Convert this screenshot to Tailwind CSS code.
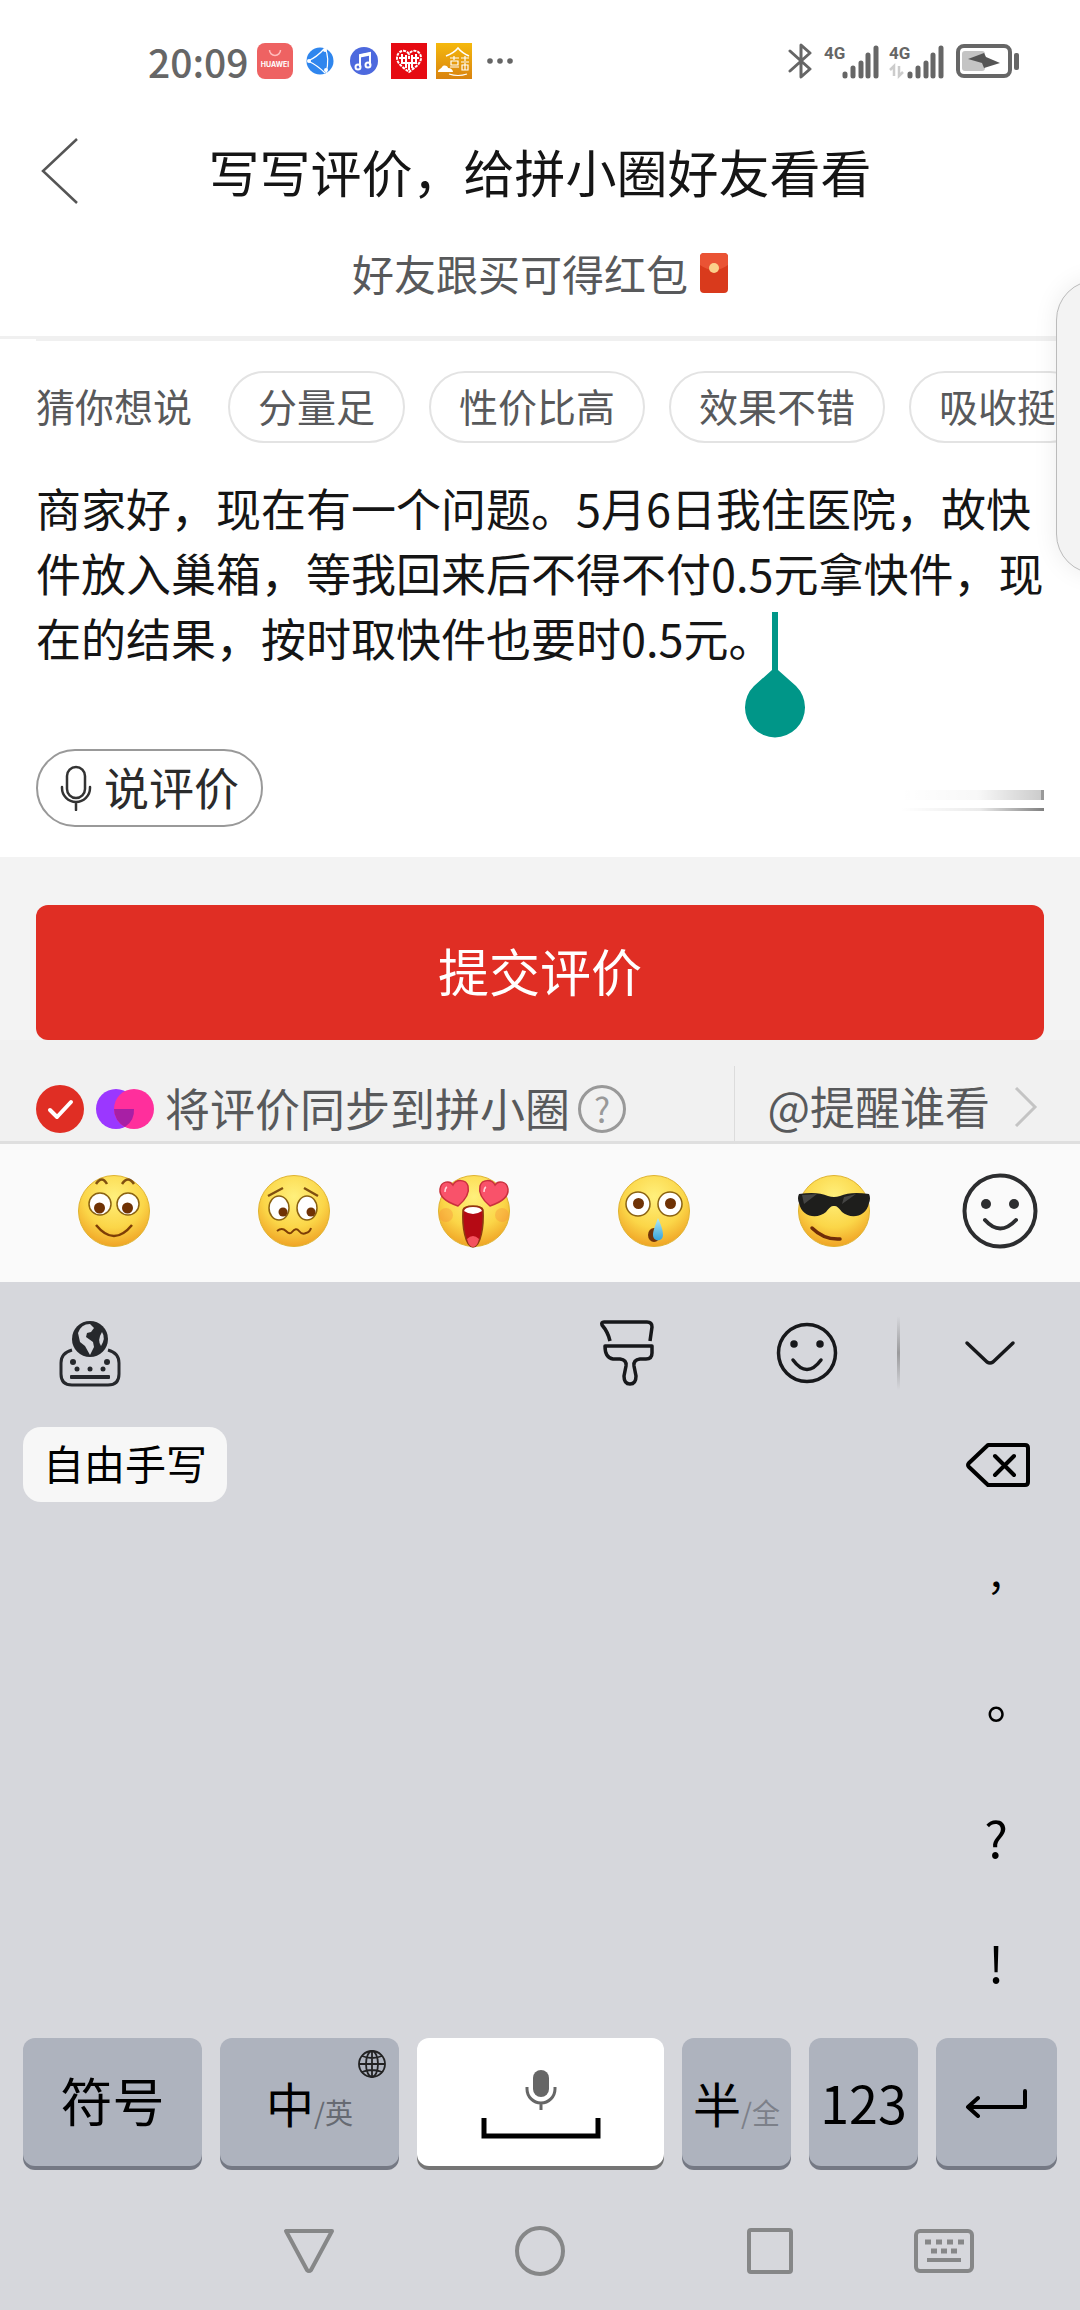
<!DOCTYPE html>
<html lang="zh-CN">
<head>
  <meta charset="UTF-8">
  <meta name="viewport" content="width=device-width, initial-scale=1.0">
  <title>写写评价</title>
  <!-- Tailwind CSS CDN -->
  <script src="https://cdn.jsdelivr.net/npm/@tailwindcss/browser@4"></script>
</head>
<body class="relative min-h-screen overflow-x-hidden bg-white font-['Noto_Sans_CJK_SC',sans-serif] text-[#151515]">

  <!-- Status bar -->
  <div class="flex h-[122px] items-center justify-between pl-[148px] pr-[60px] text-[#666]">
    <div class="flex items-center">
      <span class="text-[39px] font-medium leading-none">20:09</span>
      <svg class="ml-2 size-9" viewBox="0 0 36 36">
        <rect width="36" height="36" rx="8" fill="#ee6262"/>
        <path d="M12.500 7a5.500 5.500 0 0 0 11 0" fill="none" stroke="#fbb" stroke-width="1.500"/>
        <text x="18" y="24" text-anchor="middle" font-size="7" font-weight="700" font-family="Inter, sans-serif" fill="#fff">HUAWEI</text>
      </svg>
      <svg class="ml-3 size-[30px]" viewBox="0 0 30 30">
        <circle cx="15" cy="15" r="13.500" fill="#2f86ee"/>
        <path d="M3 15Q12 11 19 3M3 15q9 4 17 12M20 2q5 10 1 25" fill="none" stroke="#fff" stroke-width="1.200"/>
        <circle cx="4" cy="15" r="2" fill="#fff"/><circle cx="20" cy="4" r="2" fill="#fff"/><circle cx="21" cy="24" r="2" fill="#fff"/>
      </svg>
      <svg class="ml-[14px] size-[30px]" viewBox="0 0 30 30">
        <circle cx="15" cy="15" r="14" fill="#4d69de"/>
        <path d="M11 21V9l10-2v12" fill="none" stroke="#fff" stroke-width="2"/><path d="M11 10l10-2" stroke="#fff" stroke-width="3"/>
        <circle cx="9" cy="21" r="2.500" fill="none" stroke="#fff" stroke-width="2"/><circle cx="19" cy="19" r="2.500" fill="none" stroke="#fff" stroke-width="2"/>
      </svg>
      <svg class="ml-3 size-9" viewBox="0 0 36 36">
        <rect width="36" height="36" fill="#e60a12"/>
        <path d="M18 11C14 5 6 8 6 15c0 6 7 10 12 14 5-4 12-8 12-14 0-7-8-10-12-4z" fill="none" stroke="#fff" stroke-width="2" stroke-dasharray="3 1"/>
        <path d="M11 11v10M15 12v13M21 12v13M25 11v10M8 15h8M20 15h8M10 20h7M19 20h7M18 13v3M18 19v8" stroke="#fff" stroke-width="2"/>
      </svg>
      <svg class="ml-[9px] size-9" viewBox="0 0 36 36">
        <defs><linearGradient id="gold" x1="0" y1="0" x2="0" y2="1"><stop stop-color="#f5b90d"/><stop offset="1" stop-color="#d9830f"/></linearGradient></defs>
        <rect width="36" height="36" fill="url(#gold)"/>
        <path d="M10 13Q18 10 22 5q4 5 11 8" fill="none" stroke="#fff" stroke-width="1.600"/>
        <path d="M14 15h9M18 13v4M15 18h7v4h-7zM14 24h9M25 15h8M29 13v5M25 19h8M26 22h6v5h-6zM29 20v7M13 31q9 3 18 0" fill="none" stroke="#fff" stroke-width="1.200"/>
        <path d="M2 29c0-3 3-3 4-5 2-3 6-1 6 1 3 0 5 2 5 4z" fill="#fff"/>
      </svg>
      <svg class="ml-[14px] h-2 w-7" viewBox="0 0 28 8" fill="#666"><circle cx="4" cy="4" r="2.800"/><circle cx="14" cy="4" r="2.800"/><circle cx="24" cy="4" r="2.800"/></svg>
    </div>
    <div class="flex items-center">
      <svg class="h-9 w-6" viewBox="0 0 24 36" fill="none" stroke="#666" stroke-width="3" stroke-linejoin="round" stroke-linecap="round">
        <path d="M2 8l20 18-9 8V2l9 8L2 28"/>
      </svg>
      <svg class="ml-3 h-9 w-[55px]" viewBox="0 0 55 36">
        <text x="0" y="16" font-size="17" font-weight="700" font-family="Roboto, sans-serif" fill="#666">4G</text>
        <path d="M21 33v-2M29 33v-8M37 33V20M44 33V12M52 33V5" stroke="#666" stroke-width="5" stroke-linecap="round"/>
      </svg>
      <svg class="ml-[10px] h-9 w-[55px]" viewBox="0 0 55 36">
        <text x="0" y="16" font-size="17" font-weight="700" font-family="Roboto, sans-serif" fill="#666">4G</text>
        <path d="M1 27l4-4v10M10 23v10l4-4" fill="none" stroke="#ccc" stroke-width="2.500"/>
        <path d="M21 33v-2M29 33v-8M37 33V20M44 33V12M52 33V5" stroke="#666" stroke-width="5" stroke-linecap="round"/>
      </svg>
      <svg class="ml-3 h-9 w-16" viewBox="0 0 64 36">
        <rect x="2" y="3" width="52" height="30" rx="6" fill="none" stroke="#666" stroke-width="4"/>
        <rect x="6" y="8" width="23" height="20" rx="3" fill="#c4c4c4"/>
        <path d="M12 16l16-6 2 4 14 6-16 5-2-5z" fill="#555"/>
        <rect x="58" y="10" width="5" height="17" rx="2" fill="#666"/>
      </svg>
    </div>
  </div>

  <!-- Header -->
  <header>
    <div class="relative flex h-[98px] items-center justify-center">
      <button type="button" aria-label="返回" class="absolute left-10">
        <svg class="h-[68px] w-10" viewBox="0 0 40 68" fill="none" stroke="#555" stroke-width="2.500"><path d="M37 2L3 34l34 32"/></svg>
      </button>
      <h1 class="text-[51px] leading-none">写写评价，给拼小圈好友看看</h1>
    </div>
    <p class="flex h-[116px] items-center justify-center gap-3 pb-[10px] text-[42px] leading-none text-[#58595b]">
      好友跟买可得红包
      <svg class="h-10 w-7" viewBox="0 0 28 40">
        <rect width="28" height="40" rx="4" fill="#d93a1c"/>
        <path d="M0 4a4 4 0 0 1 4-4h20a4 4 0 0 1 4 4v8q-14 10-28 0z" fill="#ea5334"/>
        <circle cx="14" cy="15" r="5" fill="#fbd08a"/>
      </svg>
    </p>
    <div class="h-[3px] bg-[#f0f0f0]"></div>
    <div class="ml-9 h-[2px] bg-[#f0f0f0]"></div>
  </header>

  <!-- Side panel handle -->
  <div class="pointer-events-none absolute right-0 top-[250px] h-[360px] w-12 overflow-hidden">
    <div class="absolute left-6 top-[30px] h-[294px] w-20 rounded-[44px] border border-[#bbb] bg-[#f3f3f3] shadow-[0_0_24px_rgba(0,0,0,0.08)]"></div>
  </div>

  <main>
    <!-- Suggested phrases -->
    <div class="flex items-center gap-6 overflow-hidden whitespace-nowrap pl-9 pt-[30px] text-[39px] leading-none text-[#58595b]">
      <span class="mr-3 shrink-0 pb-1">猜你想说</span>
      <button type="button" class="h-[72px] shrink-0 rounded-full border-2 border-[#e3e3e3] px-7 pb-1">分量足</button>
      <button type="button" class="h-[72px] shrink-0 rounded-full border-2 border-[#e3e3e3] px-7 pb-1">性价比高</button>
      <button type="button" class="h-[72px] shrink-0 rounded-full border-2 border-[#e3e3e3] px-7 pb-1">效果不错</button>
      <button type="button" class="h-[72px] shrink-0 rounded-full border-2 border-[#e3e3e3] px-7 pb-1">吸收挺</button>
    </div>

    <!-- Review text -->
    <div class="relative mt-8">
      <textarea rows="3" aria-label="评价内容" spellcheck="false" class="block w-full resize-none overflow-hidden pl-9 pr-6 text-[45px] leading-[65px] outline-none">商家好，现在有一个问题。5月6日我住医院，故快件放入巢箱，等我回来后不得不付0.5元拿快件，现在的结果，按时取快件也要时0.5元。</textarea>
      <svg class="absolute left-[744px] top-[137px] h-[126px] w-[62px]" viewBox="0 0 62 126" fill="#009688">
        <path d="M28 0h6v58l18 16a30 30 0 1 1-42 0l18-16z"/>
      </svg>
    </div>

    <div class="mt-[79px] flex items-center justify-between px-9 pb-[30px]">
      <button type="button" class="flex h-[78px] items-center gap-3 rounded-full border-2 border-[#999] px-[22px] text-[45px] leading-none text-[#2b2b2b]">
        <svg class="h-[46px] w-8" viewBox="0 0 32 46" fill="none" stroke="#333" stroke-width="2.500" stroke-linecap="round">
          <rect x="7" y="2" width="18" height="31" rx="9"/><path d="M2 22v1a14 14 0 0 0 28 0v-1M16 37v8"/>
        </svg>
        <span class="pb-1">说评价</span>
      </button>
      <div class="mt-6 w-40 space-y-2">
        <div class="h-[10px] border-r-3 border-[#999] bg-linear-to-r from-transparent from-10% via-black/3 via-60% to-black/20"></div>
        <div class="h-[3px] bg-linear-to-r from-transparent from-10% via-black/8 via-60% to-black/50"></div>
      </div>
    </div>

    <!-- Submit -->
    <div class="bg-[#f3f3f3] px-9 pt-12">
      <button type="button" class="block h-[135px] w-full rounded-xl bg-[#e02e24] pb-1 text-[51px] leading-none text-white">提交评价</button>
    </div>

    <!-- Sync options -->
    <div class="flex h-[104px] items-end border-b-3 border-[#dfdfdf] bg-[#f1f1f1] pl-9 text-[45px] leading-none text-[#58595b]">
      <label class="flex h-16 items-center">
        <input type="checkbox" checked class="peer sr-only">
        <svg class="size-12" viewBox="0 0 48 48"><circle cx="24" cy="24" r="24" fill="#e02e24"/><path d="M14 25l7 7 14-15" fill="none" stroke="#fff" stroke-width="4" stroke-linecap="round" stroke-linejoin="round"/></svg>
        <svg class="ml-3 h-10 w-[58px]" viewBox="0 0 58 40">
          <circle cx="20" cy="20" r="20" fill="#9b37ff"/><circle cx="38" cy="20" r="20" fill="#ff2f9c"/>
          <path d="M18 20h20a20 20 0 0 1-9 18 20 20 0 0 1-11-18z" fill="#a81fa5"/>
        </svg>
        <span class="ml-[11px] pb-1">将评价同步到拼小圈</span>
      </label>
      <button type="button" aria-label="说明" class="mb-2 ml-2 flex size-12 items-center justify-center rounded-full border-3 border-[#999] text-[34px] leading-none text-[#999]">?</button>
      <button type="button" class="ml-auto flex h-[75px] items-center border-l border-[#dcdcdc] pl-8 pr-[42px] pt-[7px]">
        <span class="pb-1">@提醒谁看</span>
        <svg class="ml-6 h-10 w-6" viewBox="0 0 24 40" fill="none" stroke="#c4c4c4" stroke-width="3"><path d="M2 1l19 19L2 39"/></svg>
      </button>
    </div>
  </main>

  <!-- Emoji bar -->
  <div class="grid h-[138px] grid-cols-[180fr_180fr_180fr_180fr_180fr_152fr] items-center justify-items-center bg-[#fafafa] pb-1 pl-6 pr-1">
    <button type="button" aria-label="微笑">
      <svg class="h-[76px] w-[72px]" viewBox="0 -2 72 76">
        <defs>
          <radialGradient id="face" cx=".5" cy=".3" r=".72"><stop stop-color="#fff07c"/><stop offset=".6" stop-color="#fbd648"/><stop offset="1" stop-color="#efa023"/></radialGradient>
        </defs>
        <circle cx="36" cy="36" r="35.500" fill="url(#face)" stroke="#dfb32f"/>
        <path d="M18 9q6-9 11 0M44 9q6-9 12 0" fill="none" stroke="#805010" stroke-width="2.500"/>
        <g fill="#fff" stroke="#8a6212" stroke-width="1.500"><circle cx="22" cy="29" r="11"/><circle cx="50" cy="29" r="11"/></g>
        <circle cx="21.500" cy="33" r="5.500" fill="#6f3205"/><circle cx="49.500" cy="33" r="5.500" fill="#6f3205"/>
        <path d="M18 50q18 22 36 0" fill="none" stroke="#7d3d06" stroke-width="2.500"/>
      </svg>
    </button>
    <button type="button" aria-label="难过">
      <svg class="h-[76px] w-[72px]" viewBox="0 -2 72 76">
        <circle cx="36" cy="36" r="35.500" fill="url(#face)" stroke="#dfb32f"/>
        <path d="M10 21l15-8M46 13l14 8" stroke="#805010" stroke-width="2.500"/>
        <g fill="#fff" stroke="#8a6212" stroke-width="1.500"><ellipse cx="21" cy="33" rx="10" ry="12"/><ellipse cx="49" cy="33" rx="10" ry="12"/></g>
        <circle cx="25" cy="37" r="4.500" fill="#6f3205"/><circle cx="53" cy="37" r="4.500" fill="#6f3205"/>
        <path d="M19 56q5-4 9 0t6 1q4-5 7-1t7 2q4-1 5-5" fill="none" stroke="#7d3d06" stroke-width="2"/>
      </svg>
    </button>
    <button type="button" aria-label="喜欢">
      <svg class="h-[76px] w-[72px] overflow-visible" viewBox="0 -2 72 76">
        <circle cx="36" cy="36" r="35.500" fill="url(#face)" stroke="#dfb32f"/>
        <circle cx="8" cy="40" r="7" fill="#f58a3c" fill-opacity=".35"/><circle cx="64" cy="40" r="7" fill="#f58a3c" fill-opacity=".35"/>
        <g fill="#f9526a" stroke="#c9303d" stroke-width="1.500">
          <path d="M20 31C11 28 1 23 2 14 3 6 12 5 15 10c3-6 13-6 15 1 2 8-4 15-10 20z"/>
          <path d="M52 31c9-3 19-8 18-17C69 6 60 5 57 10c-3-6-13-6-15 1-2 8 4 15 10 20z"/>
        </g>
        <path d="M7 17q0-4 2-5M46 17q0-4 2-5" fill="none" stroke="#ffd5da" stroke-width="1.500"/>
        <path d="M25 35q1-4 10-4t10 4c1 15-2 37-10 37S24 50 25 35z" fill="#b50a14" stroke="#8d3a10" stroke-width="1.500"/>
        <path d="M26 36q1-4 9-4t9 4q-9 6-18 0z" fill="#fff"/>
        <path d="M29 64q6-6 12 0-2 8-6 8t-6-8z" fill="#f4525f"/>
      </svg>
    </button>
    <button type="button" aria-label="惊讶">
      <svg class="h-[76px] w-[72px]" viewBox="0 -2 72 76">
        <defs><linearGradient id="tear" x1="0" y1="0" x2="0" y2="1"><stop stop-color="#b3e9f3"/><stop offset="1" stop-color="#36a3dc"/></linearGradient></defs>
        <circle cx="36" cy="36" r="35.500" fill="url(#face)" stroke="#dfb32f"/>
        <g fill="#fff" stroke="#8a6212" stroke-width="1.500"><circle cx="20" cy="29" r="12"/><circle cx="52" cy="29" r="12"/></g>
        <circle cx="20.500" cy="28.500" r="5.500" fill="#6f3205"/><circle cx="52.500" cy="28.500" r="5.500" fill="#6f3205"/>
        <ellipse cx="36" cy="60" rx="6" ry="7" fill="#70330a"/>
        <path d="M40 43c4 9 5 13 5 17 0 7-10 7-10 0 0-4 2-9 5-17z" fill="url(#tear)"/>
      </svg>
    </button>
    <button type="button" aria-label="酷">
      <svg class="h-[76px] w-[72px]" viewBox="0 -2 72 76">
        <circle cx="36" cy="36" r="35.500" fill="url(#face)" stroke="#dfb32f"/>
        <path d="M1 19q18-3 29 2 6 2 12 0 11-5 29-2 2 4 0 9c-3 15-19 16-27 9-4-5-5-6-8-6s-4 1-8 6c-8 7-24 6-27-9q-2-5 0-9z" fill="#1e1e1c"/>
        <path d="M4 20l15-1-13 10zM46 22l12-3-14 10z" fill="#555" fill-opacity=".7"/>
        <path d="M14 53q12 12 28 11" fill="none" stroke="#6f2c08" stroke-width="3.500" stroke-linecap="round"/>
      </svg>
    </button>
    <button type="button" aria-label="更多表情">
      <svg class="size-[76px]" viewBox="0 0 76 76">
        <circle cx="38" cy="38" r="35.500" fill="none" stroke="#2c2d2f" stroke-width="4"/>
        <circle cx="24" cy="31" r="5" fill="#2c2d2f"/><circle cx="52" cy="31" r="5" fill="#2c2d2f"/>
        <path d="M23 47q15 17 31 0" fill="none" stroke="#2c2d2f" stroke-width="4" stroke-linecap="round"/>
      </svg>
    </button>
  </div>

  <!-- Keyboard -->
  <div class="bg-[#d6d7dc] text-black">
    <div class="flex h-[120px] items-center pl-[58px] pr-[64px] pt-[22px]">
      <button type="button" aria-label="切换输入法">
        <svg class="h-[70px] w-16" viewBox="0 0 64 70" fill="none">
          <path d="M14 32q-11 3-11 13v11q0 11 11 11h36q11 0 11-11V45q0-10-11-13" stroke="#26282c" stroke-width="3"/>
          <circle cx="32" cy="21" r="18" fill="#26282c"/>
          <path d="M20 15q3-9 12-9l4 4-3 4-4 1-1 4 7 5 1 5-4 8-5-9-5-4z" fill="#d6d7dc"/><path d="M44 14q4 6-1 14-4-6 1-14z" fill="#d6d7dc"/>
          <g fill="#26282c"><circle cx="15" cy="44" r="3"/><circle cx="49" cy="44" r="3"/><circle cx="19" cy="51" r="2.500"/><circle cx="32" cy="51" r="2.500"/><circle cx="45" cy="51" r="2.500"/><rect x="12" y="57" width="40" height="4" rx="1"/></g>
        </svg>
      </button>
      <button type="button" aria-label="皮肤" class="ml-auto">
        <svg class="h-[66px] w-14" viewBox="0 0 56 66" fill="none" stroke="#17181b" stroke-width="3.500" stroke-linejoin="round">
          <path d="M11 21Q9 12 3 5q-1-3 2-3h43q5 0 5 5l-2 14M6 26h47v7q0 6-6 6h-6q-7 1-6 7l2 10q0 8-6 8t-6-8l2-10q1-6-6-7h-7q-8-1-8-13z"/>
        </svg>
      </button>
      <button type="button" aria-label="表情" class="ml-[120px]">
        <svg class="size-16" viewBox="0 0 64 64" fill="none" stroke="#17181b" stroke-width="3.500">
          <circle cx="32" cy="32" r="28.500"/><path d="M18 39q14 19 28 0" stroke-linecap="round"/>
          <circle cx="19" cy="23" r="2" fill="#17181b"/><circle cx="45" cy="23" r="2" fill="#17181b"/>
        </svg>
      </button>
      <div class="ml-[58px] h-[74px] w-[3px] bg-linear-to-b from-transparent via-[#9a9a9c] to-transparent"></div>
      <button type="button" aria-label="收起键盘" class="ml-16">
        <svg class="h-7 w-[52px]" viewBox="0 0 52 28" fill="none" stroke="#17181b" stroke-width="3.500" stroke-linecap="round" stroke-linejoin="round"><path d="M3 4l20 19q3 2 6 0L49 4"/></svg>
      </button>
    </div>

    <div class="flex items-start justify-between pl-[23px] pr-6">
      <button type="button" class="mt-[25px] h-[75px] rounded-[18px] bg-[#f7f7f7] px-5 pb-1 text-[41px] leading-none">自由手写</button>
      <div class="grid w-[120px] auto-rows-[125px] text-[50px] leading-none">
        <button type="button" aria-label="删除" class="flex items-center justify-center pl-1">
          <svg class="h-11 w-16" viewBox="0 0 64 44" fill="none" stroke="#000" stroke-width="4" stroke-linejoin="round" stroke-linecap="round"><path d="M22 2h37q3 0 3 3v34q0 3-3 3H22L3 24q-2-2 0-4zM29 13l19 19M48 13L29 32"/></svg>
        </button>
        <button type="button" class="pb-2 font-['Noto_Sans_CJK_TC',sans-serif] text-[39px]" lang="zh-TW">，</button>
        <button type="button" class="pb-2 font-['Noto_Sans_CJK_TC',sans-serif]" lang="zh-TW">。</button>
        <button type="button" class="pb-2">?</button>
        <button type="button" class="pb-2">!</button>
      </div>
    </div>

    <div class="mt-[11px] grid h-32 grid-cols-[179fr_179fr_247fr_109fr_109fr_121fr] gap-[18px] px-[23px] text-[52px] leading-none">
      <button type="button" class="rounded-xl bg-[#aeb3be] pb-1 shadow-[0_4px_0_#757984]">符号</button>
      <button type="button" class="relative flex items-center justify-center rounded-xl bg-[#aeb3be] shadow-[0_4px_0_#757984]">
        <span class="text-[48px]">中</span><span class="pt-5 text-[28px] text-[#666a72]">/英</span>
        <svg class="absolute right-[13px] top-3 size-7" viewBox="0 0 28 28" fill="none" stroke="#222" stroke-width="1.800"><circle cx="14" cy="14" r="13"/><ellipse cx="14" cy="14" rx="6" ry="13"/><path d="M14 1v26M1 14h26M4 6q10 4 20 0M4 22q10-4 20 0"/></svg>
      </button>
      <button type="button" aria-label="空格" class="flex flex-col items-center justify-center gap-2 rounded-xl bg-white pt-1 shadow-[0_4px_0_#757575]">
        <svg class="h-10 w-8" viewBox="0 0 32 40" fill="none" stroke="#666" stroke-width="3"><rect x="8" y="0" width="16" height="27" rx="8" fill="#666" stroke="none"/><path d="M2 17v2a14 14 0 0 0 28 0v-2M16 33v7"/></svg>
        <svg class="h-[21px] w-[120px]" viewBox="0 0 120 21" fill="none" stroke="#000" stroke-width="5"><path d="M3 0v18h114V0"/></svg>
      </button>
      <button type="button" class="flex items-center justify-center rounded-xl bg-[#aeb3be] shadow-[0_4px_0_#757984]">
        <span class="text-[48px]">半</span><span class="pt-5 text-[28px] text-[#7c8089]">/全</span>
      </button>
      <button type="button" class="rounded-xl bg-[#aeb3be] shadow-[0_4px_0_#757984]">123</button>
      <button type="button" aria-label="换行" class="flex items-center justify-center rounded-xl bg-[#aeb3be] shadow-[0_4px_0_#757984]">
        <svg class="h-8 w-16" viewBox="0 0 64 32" fill="none" stroke="#000" stroke-width="4" stroke-linecap="round" stroke-linejoin="round"><path d="M60 5v16H4M13 12L3 21l10 9"/></svg>
      </button>
    </div>

    <!-- System navigation -->
    <nav class="mt-1 grid h-[140px] grid-cols-[193fr_231fr_231fr_229fr_120fr_76fr] items-center justify-items-center pt-[22px]">
      <button type="button" aria-label="返回" class="col-start-2">
        <svg class="h-[46px] w-[52px]" viewBox="0 0 52 46" fill="none" stroke="#868788" stroke-width="4" stroke-linejoin="round"><path d="M3 3h46L28 42q-2 2-4 0z"/></svg>
      </button>
      <button type="button" aria-label="主页">
        <svg class="size-[52px]" viewBox="0 0 52 52" fill="none" stroke="#868788" stroke-width="4"><circle cx="26" cy="26" r="23"/></svg>
      </button>
      <button type="button" aria-label="最近任务">
        <svg class="size-[46px]" viewBox="0 0 46 46" fill="none" stroke="#868788" stroke-width="4"><rect x="2" y="2" width="42" height="42" rx="2"/></svg>
      </button>
      <button type="button" aria-label="键盘">
        <svg class="h-11 w-[60px]" viewBox="0 0 60 44" fill="none" stroke="#868788" stroke-width="4"><rect x="2" y="2" width="56" height="40" rx="4"/><path d="M11 13h39" stroke-width="5" stroke-dasharray="6 5"/><path d="M17 22h27" stroke-width="5" stroke-dasharray="6 4"/><path d="M13 31h34"/></svg>
      </button>
    </nav>
  </div>
</body>
</html>
